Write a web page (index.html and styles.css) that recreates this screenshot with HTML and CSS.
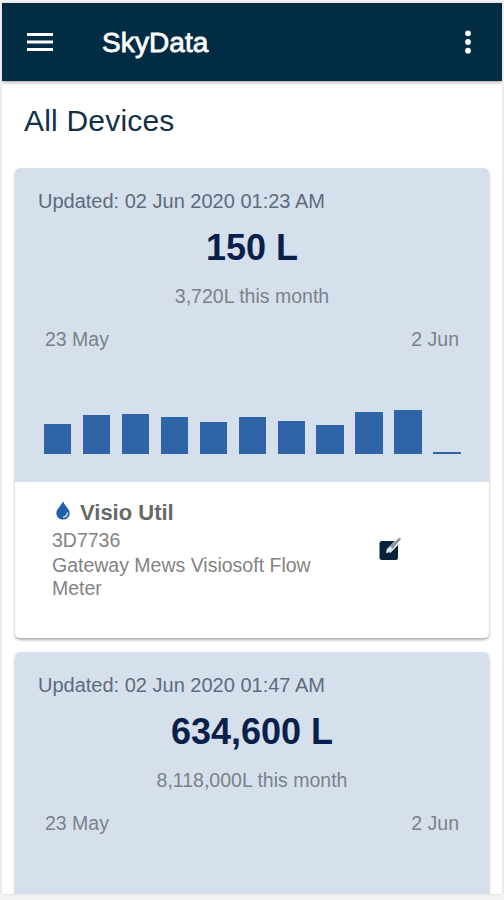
FILE: index.html
```
<!DOCTYPE html>
<html lang="en">
<head>
  <meta charset="UTF-8">
  <meta name="viewport" content="width=device-width, initial-scale=1.0">
  <title>SkyData</title>
  <link rel="stylesheet" href="styles.css">
</head>
<body>
  <div class="screen">
    <header class="toolbar">
      <svg class="menu-icon" width="26" height="18" viewBox="0 0 26 18">
        <path d="M0 1.5h26M0 9h26M0 16.5h26" stroke="#fff" stroke-width="2.8"/>
      </svg>
      <span class="title">SkyData</span>
      <svg class="more-icon" width="6" height="24" viewBox="0 0 6 24" fill="#fff">
        <circle cx="3" cy="3.3" r="2.9"/>
        <circle cx="3" cy="12" r="2.9"/>
        <circle cx="3" cy="20.7" r="2.9"/>
      </svg>
    </header>

    <main>
      <h1>All Devices</h1>

      <div class="card">
        <div class="usage">
          <p class="updated">Updated: 02 Jun 2020 01:23 AM</p>
          <p class="total">150 L</p>
          <p class="month">3,720L this month</p>
          <div class="range">
            <span>23 May</span>
            <span>2 Jun</span>
          </div>
          <div class="chart">
            <div class="bar" style="height: 30px"></div>
            <div class="bar" style="height: 39px"></div>
            <div class="bar" style="height: 40px"></div>
            <div class="bar" style="height: 37px"></div>
            <div class="bar" style="height: 32px"></div>
            <div class="bar" style="height: 37px"></div>
            <div class="bar" style="height: 33px"></div>
            <div class="bar" style="height: 29px"></div>
            <div class="bar" style="height: 42px"></div>
            <div class="bar" style="height: 44px"></div>
            <div class="bar" style="height: 1.4px"></div>
          </div>
        </div>
        <div class="device">
          <div class="info">
            <h2>
              <svg class="drop-icon" width="14" height="19" viewBox="0 0 14 19">
                <path d="M7 0.3C8 4 13.7 8 13.7 12.3a6.7 6.3 0 0 1-13.4 0C0.3 8 6 4 7 0.3z" fill="#1f5fa8"/>
                <path d="M11.3 11.8c0 2.4-1.4 4-3.8 4.3" fill="none" stroke="#dbe7f3" stroke-width="1.3" stroke-linecap="round"/>
              </svg>
              Visio Util
            </h2>
            <p>3D7736</p>
            <p>Gateway Mews Visiosoft Flow Meter</p>
          </div>
          <svg class="edit-icon" width="24" height="24" viewBox="0 0 24 24">
            <rect x="0.5" y="4" width="18.5" height="19" rx="2.5" fill="#02233b"/>
            <path d="M9.5 14.2L20 3.2" stroke="#fff" stroke-width="5"/>
            <path d="M7 16l1-4L20.5 0.6l1.6 1.4L11 15z" fill="#8b9299"/>
            <path d="M7 16l1-4 3.4-2.6 2 2L11 15z" fill="#dfe4e8"/>
          </svg>
        </div>
      </div>

      <div class="card">
        <div class="usage">
          <p class="updated">Updated: 02 Jun 2020 01:47 AM</p>
          <p class="total">634,600 L</p>
          <p class="month">8,118,000L this month</p>
          <div class="range">
            <span>23 May</span>
            <span>2 Jun</span>
          </div>
          <div class="chart"></div>
        </div>
      </div>
    </main>
  </div>
</body>
</html>
```
FILE: styles.css
```
* {
  box-sizing: border-box;
}

body {
  font-family: "Liberation Sans", Arial, sans-serif;
  background-color: #f3f3f3;
  margin: 0;
  padding: 3px 2px 6px;
  height: 100vh;
  overflow: hidden;
}

h1, h2, p {
  margin: 0;
}

.screen {
  height: 891px;
  background-color: #fff;
  overflow: hidden;
  box-shadow: 0 0 2px #ccc;
}

.toolbar {
  display: flex;
  align-items: center;
  height: 78px;
  padding: 0 31px 0 25px;
  background-color: #022c43;
  box-shadow: 0 1px 4px rgba(60, 45, 30, 0.5);
}

.title {
  flex: 1;
  margin-left: 49px;
  padding-top: 1px;
  font-size: 28px;
  letter-spacing: 0.1px;
  color: #fff;
  -webkit-text-stroke: 0.8px #fff;
}

main {
  padding: 0 13px;
}

h1 {
  height: 86.5px;
  padding: 22px 0 0 9px;
  font-size: 30px;
  line-height: 36px;
  font-weight: normal;
  letter-spacing: 0.2px;
  color: #123147;
}

.card {
  margin-bottom: 14px;
  border-radius: 5px;
  background-color: #fff;
  box-shadow: 0 2px 3px rgba(0, 0, 0, 0.32);
  overflow: hidden;
}

.usage {
  height: 314px;
  padding: 20px 28px 28px;
  background-color: #d6e0ec;
  color: #7b8189;
  font-size: 19.5px;
}

.updated {
  margin-left: -5px;
  font-size: 20px;
  line-height: 26px;
  color: #5d6b7d;
}

.total {
  padding-top: 13px;
  font-size: 36px;
  line-height: 42px;
  font-weight: bold;
  text-align: center;
  color: #09204a;
}

.month {
  padding-top: 15px;
  line-height: 24px;
  text-align: center;
}

.range {
  display: flex;
  justify-content: space-between;
  padding: 19px 2px 0;
  line-height: 24px;
}

.chart {
  display: flex;
  align-items: flex-end;
  justify-content: space-between;
  height: 103px;
  padding-left: 0.6px;
}

.bar {
  width: 27.5px;
  background-color: #2f65a8;
}

.device {
  display: flex;
  height: 156px;
  padding: 18px 86px 0 37px;
  color: #838383;
}

.info {
  flex: 1;
}

.info h2 {
  display: flex;
  align-items: center;
  gap: 10px;
  margin-bottom: 3px;
  padding-left: 4px;
  height: 26px;
  font-size: 22px;
  color: #686868;
}

.drop-icon {
  margin-bottom: 4px;
}

.info p {
  width: 280px;
  margin-bottom: 3px;
  font-size: 19.5px;
  line-height: 22.5px;
}

.edit-icon {
  margin-top: 37px;
}
```
